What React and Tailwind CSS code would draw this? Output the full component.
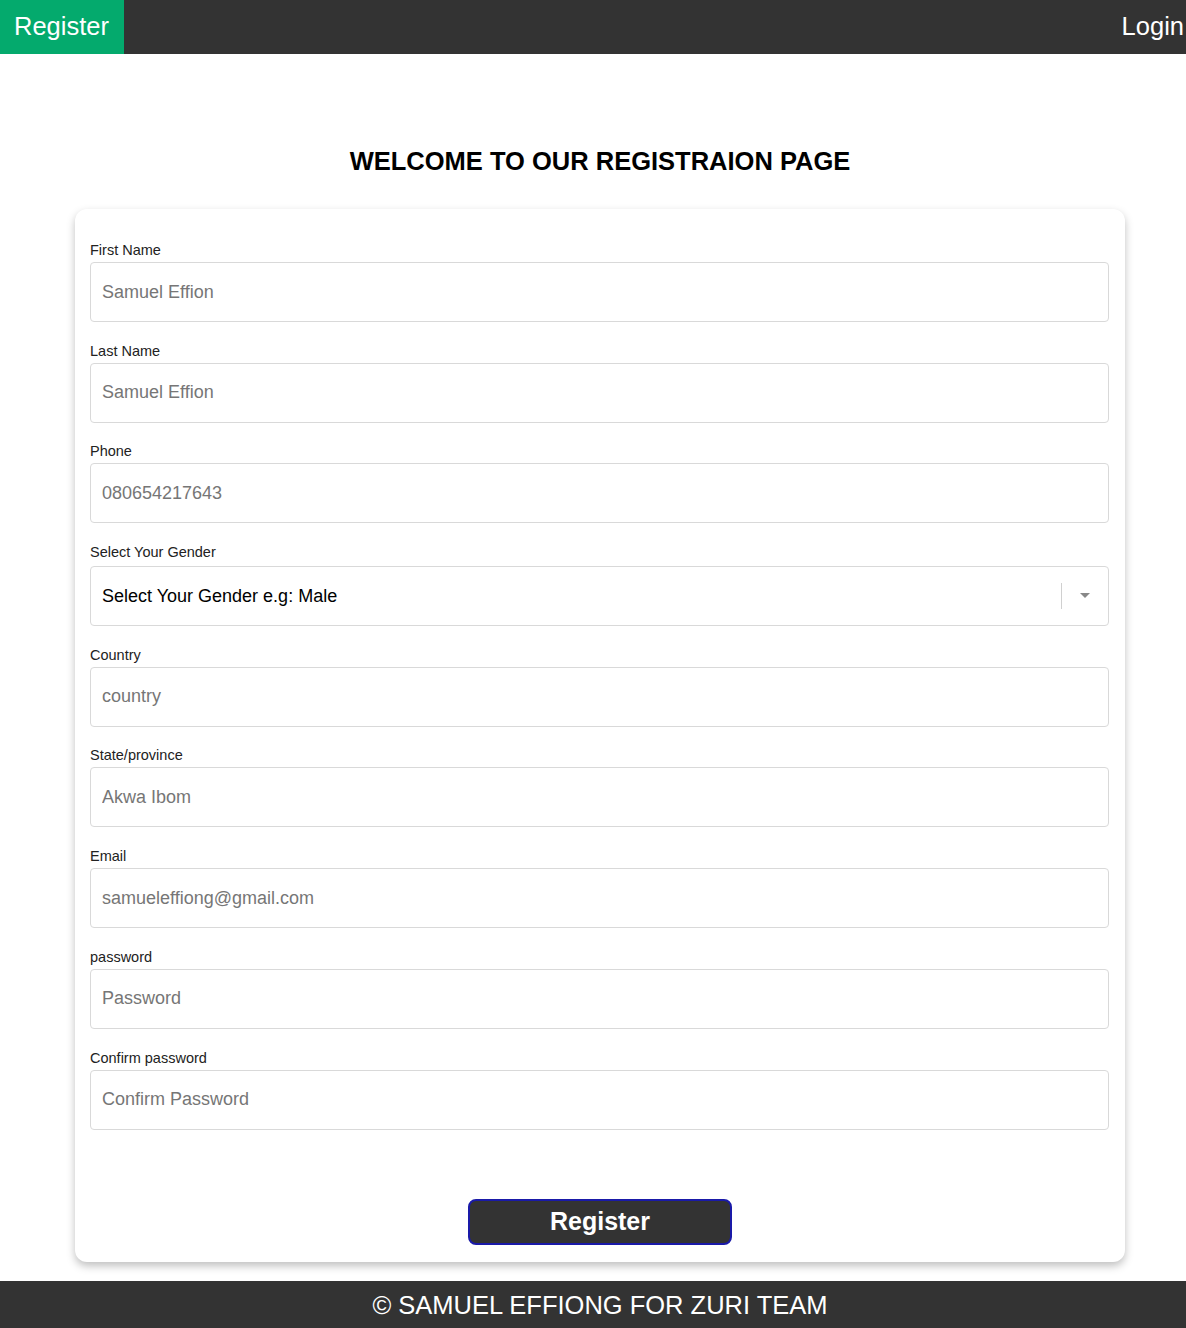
import React from 'react';

const fields = [
  { label: 'First Name', placeholder: 'Samuel Effion' },
  { label: 'Last Name', placeholder: 'Samuel Effion' },
  { label: 'Phone', placeholder: '080654217643' },
  { label: 'Select Your Gender', select: true },
  { label: 'Country', placeholder: 'country' },
  { label: 'State/province', placeholder: 'Akwa Ibom' },
  { label: 'Email', placeholder: 'samueleffiong@gmail.com' },
  { label: 'password', placeholder: 'Password', type: 'password' },
  { label: 'Confirm password', placeholder: 'Confirm Password', type: 'password' },
];

const App = () => {
  return (
    <div className="min-h-[1328px] bg-white font-['Liberation_Sans',Arial,sans-serif] flex flex-col">
      {/* Nav */}
      <nav className="h-[54px] bg-[#333333] flex items-stretch justify-between">
        <a className="bg-[#04AA6D] text-white text-[25.5px] px-[14px] flex items-center pb-[2px] w-[124px]">Register</a>
        <a className="text-white text-[25.5px] flex items-center pr-[2px] pb-[2px]">Login</a>
      </nav>

      <div className="ml-[75px] w-[1050px]">
        <h1 className="mt-[93px] text-center text-[25.5px] leading-[28px] font-bold text-black">
          WELCOME TO OUR REGISTRAION PAGE
        </h1>

        <form className="mt-[34px] bg-white rounded-[12px] shadow-[0_4px_9px_rgba(0,0,0,0.25)] px-[15px] pt-[31px] pb-[17px]">
          {fields.map((f) => (
            <div key={f.label} className="mb-[18.7px] w-[1019px]">
              <label className={`block text-[14.5px] leading-[20px] text-[#222] ${f.select ? 'mb-[4px]' : 'mb-[2px]'}`}>
                {f.label}
              </label>
              {f.select ? (
                <div className="h-[60px] border border-[#d9d9d9] rounded-[4px] flex items-center pl-[11px]">
                  <span className="flex-1 text-[18px] text-black">Select Your Gender e.g: Male</span>
                  <span className="w-px h-[26px] bg-[#d0d0d0]"></span>
                  <span className="w-[46px] flex justify-center">
                    <svg width="10" height="6" viewBox="0 0 10 6">
                      <path d="M0 0 L10 0 L5 5 Z" fill="#888" />
                    </svg>
                  </span>
                </div>
              ) : (
                <input
                  type={f.type || 'text'}
                  placeholder={f.placeholder}
                  className="block w-full h-[60px] border border-[#d9d9d9] rounded-[4px] px-[11px] text-[18px] placeholder:text-[#767676] outline-none"
                />
              )}
            </div>
          ))}

          <div className="flex justify-center pt-[51px]">
            <button
              type="button"
              className="w-[264px] h-[46px] bg-[#333333] border-2 border-[#1a1aa8] rounded-[8px] text-white text-[25px] font-bold"
            >
              Register
            </button>
          </div>
        </form>
      </div>

      <footer className="mt-[19px] h-[47px] bg-[#333333] flex items-center justify-center pl-[14px]">
        <span className="text-white text-[25.5px]">© SAMUEL EFFIONG FOR ZURI TEAM</span>
      </footer>
    </div>
  );
};

export default App;
